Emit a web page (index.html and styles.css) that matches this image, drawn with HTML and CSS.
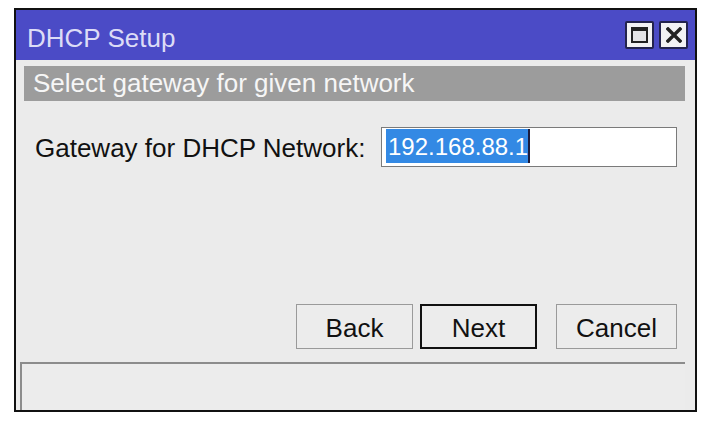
FILE: index.html
```html
<!DOCTYPE html>
<html lang="en">
  <head>
    <meta charset="UTF-8" />
    <meta name="viewport" content="width=device-width, initial-scale=1.0" />
    <title>DHCP Setup</title>
    <link rel="stylesheet" href="styles.css">
  </head>
  <body>
    <div class="window">
      <div class="titlebar">
        <span class="title">DHCP Setup</span>
        <div class="win-buttons">
          <div class="win-btn max"><span class="max-box"></span></div>
          <div class="win-btn close">
            <svg width="16" height="16" viewBox="0 0 16 16">
              <path d="M2 2 L14 14 M14 2 L2 14" stroke="#222" stroke-width="3.4" stroke-linecap="square" fill="none" />
            </svg>
          </div>
        </div>
      </div>

      <div class="header">Select gateway for given network</div>

      <div class="form-row">
        <label class="label">Gateway for DHCP Network:</label>
        <div class="input"><span class="selected">192.168.88.1</span></div>
      </div>

      <div class="buttons">
        <button class="btn back">Back</button>
        <button class="btn next">Next</button>
        <button class="btn cancel">Cancel</button>
      </div>

      <div class="status"></div>
    </div>
  </body>
</html>
```

FILE: styles.css
```css
* {
  margin: 0;
  padding: 0;
  box-sizing: border-box;
}
body {
  background: #fff;
  font-family: "Liberation Sans", Arial, sans-serif;
}
.window {
  margin: 8px 0 0 14px;
  width: 683px;
  height: 404px;
  border: 2px solid #111;
  background: #ebebeb;
  display: flex;
  flex-direction: column;
}
.titlebar {
  height: 50px;
  background: #4b4bc6;
  display: flex;
  align-items: center;
  justify-content: space-between;
  padding: 0 7px 0 11px;
}
.title {
  color: #dcdcf6;
  font-size: 26px;
  padding-top: 6px;
}
.win-buttons {
  display: flex;
  gap: 5px;
}
.win-btn {
  width: 29px;
  height: 28px;
  background: #f2f2f4;
  border: 2px solid #23234e;
  border-radius: 2px;
  display: flex;
  align-items: center;
  justify-content: center;
}
.max-box {
  width: 17px;
  height: 16px;
  border: 2px solid #222;
  border-top-width: 4px;
  background: #e4e4e6;
}
.header {
  margin: 6px 10px 0 8px;
  height: 35px;
  line-height: 35px;
  background: #9c9c9c;
  color: #f6f6f6;
  font-size: 26px;
  padding-left: 9px;
}
.form-row {
  margin-top: 26px;
  display: flex;
  align-items: center;
  justify-content: space-between;
  padding: 0 18px 0 19px;
}
.label {
  font-size: 26px;
  color: #111;
  padding-top: 3px;
  white-space: nowrap;
}
.input {
  flex-shrink: 0;
  width: 296px;
  height: 40px;
  background: #fff;
  border: 1px solid #7a7a7a;
  padding: 1px 0 0 4px;
}
.selected {
  display: inline-block;
  height: 34px;
  line-height: 35px;
  background: #3389e4;
  color: #fff;
  font-size: 24px;
  padding: 0 0 0 2px;
  border-right: 2px solid #1c1c3c;
}
.buttons {
  margin-top: auto;
  display: flex;
  justify-content: flex-end;
  padding-right: 18px;
  margin-bottom: 13px;
}
.btn {
  height: 45px;
  font-family: inherit;
  font-size: 26px;
  color: #111;
  background: #ececec;
  border: 1px solid #9a9a9a;
  padding-top: 3px;
}
.back {
  width: 117px;
}
.next {
  width: 117px;
  margin-left: 7px;
  border: 2px solid #111;
}
.cancel {
  width: 121px;
  margin-left: 19px;
}
.status {
  height: 48px;
  margin: 0 10px 0 4px;
  border-top: 2px solid #8c8c8c;
  border-left: 2px solid #8c8c8c;
  background: #ececec;
}
```
